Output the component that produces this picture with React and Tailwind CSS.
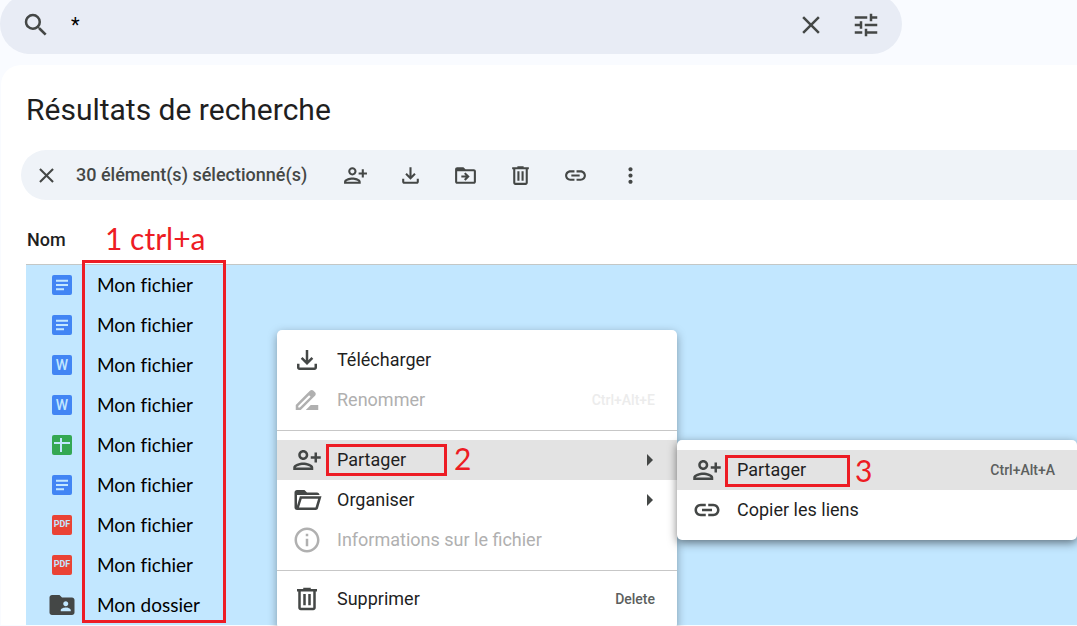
import React from 'react';

const icons = {
    search: 'M15.5 14h-.79l-.28-.27A6.47 6.47 0 0 0 16 9.5 6.5 6.5 0 1 0 9.5 16c1.61 0 3.09-.59 4.23-1.57l.27.28v.79l5 4.99L20.49 19l-4.99-5zm-6 0a4.5 4.5 0 1 1 0-9 4.5 4.5 0 0 1 0 9z',
    close: 'M19 6.41L17.59 5 12 10.59 6.41 5 5 6.41 10.59 12 5 17.59 6.41 19 12 13.41 17.59 19 19 17.59 13.41 12z',
    tune: 'M3 5h10v2H3zM15 3h2v2h4v2h-4v2h-2zM3 11h4V9h2v6H7v-2H3zM11 11h10v2H11zM3 17h6v2H3zM11 15h2v2h8v2h-8v2h-2z',
    share: 'M13 8c0-2.21-1.79-4-4-4S5 5.79 5 8s1.79 4 4 4 4-1.79 4-4zm-2 0c0 1.1-.9 2-2 2s-2-.9-2-2 .9-2 2-2 2 .9 2 2zM1 18v2h16v-2c0-2.66-5.33-4-8-4s-8 1.34-8 4zm2 0c.2-.71 3.3-2 6-2 2.69 0 5.78 1.28 6 2H3zM20 14v-3h3V9h-3V6h-2v3h-3v2h3v3h2z',
    download: 'M4 15h2v3h12v-3h2v3c0 1.1-.9 2-2 2H6c-1.1 0-2-.9-2-2v-3zM15.59 9.59L13 12.17V4h-2v8.17L8.41 9.59 7 11l5 5 5-5z',
    move: 'M20 6h-8l-2-2H4c-1.1 0-2 .9-2 2v12c0 1.1.9 2 2 2h16c1.1 0 2-.9 2-2V8c0-1.1-.9-2-2-2zm0 12H4V8h16v10zm-7.84-6H8v2h4.16l-1.59 1.59L11.99 17 16 13.01 11.99 9l-1.41 1.41L12.16 12z',
    trash: 'M15 4V3H9v1H4v2h1v13c0 1.1.9 2 2 2h10c1.1 0 2-.9 2-2V6h1V4h-5zm2 15H7V6h10v13zM9 8h2v9H9zM13 8h2v9h-2z',
    link: 'M17 7h-4v2h4c1.65 0 3 1.35 3 3s-1.35 3-3 3h-4v2h4c2.76 0 5-2.24 5-5s-2.24-5-5-5zm-6 8H7c-1.65 0-3-1.35-3-3s1.35-3 3-3h4V7H7c-2.76 0-5 2.24-5 5s2.24 5 5 5h4v-2zm-3-4h8v2H8z',
    more: 'M12 8c1.1 0 2-.9 2-2s-.9-2-2-2-2 .9-2 2 .9 2 2 2zm0 2c-1.1 0-2 .9-2 2s.9 2 2 2 2-.9 2-2-.9-2-2-2zm0 6c-1.1 0-2 .9-2 2s.9 2 2 2 2-.9 2-2-.9-2-2-2z',
    rename: 'M18.41 5.8L17.2 4.59c-.78-.78-2.05-.78-2.83 0l-2.68 2.68L3 15.96V20h4.04l8.74-8.74 2.63-2.63c.79-.78.79-2.05 0-2.83zM6.21 18H5v-1.21l8.66-8.66 1.21 1.21L6.21 18zM11 20l4-4h6v4H11z',
    organize: 'M4 20c-1.1 0-2-.9-2-2V6c0-1.1.9-2 2-2h6l2 2h8c1.1 0 2 .9 2 2H4v8.6L6.3 9h17.3l-2.8 9.6c-.2.8-.9 1.4-1.8 1.4zm1.6-2h13.2l2.1-7H7.8z',
    info: 'M11 7h2v2h-2zm0 4h2v6h-2zm1-9C6.48 2 2 6.48 2 12s4.48 10 10 10 10-4.48 10-10S17.52 2 12 2zm0 18c-4.41 0-8-3.59-8-8s3.59-8 8-8 8 3.59 8 8-3.59 8-8 8z',
    folder: 'M20 6h-8l-2-2H4c-1.1 0-2 .9-2 2v12c0 1.1.9 2 2 2h16c1.1 0 2-.9 2-2V8c0-1.1-.9-2-2-2zm-5 3c1.1 0 2 .9 2 2s-.9 2-2 2-2-.9-2-2 .9-2 2-2zm4 8h-8v-1c0-1.33 2.67-2 4-2s4 .67 4 2v1z',
};

function Icon({ name, className = 'size-[30px]' }) {
    return (
        <svg viewBox="0 0 24 24" fill="currentColor" fillRule="evenodd" className={`shrink-0 ${className}`} aria-hidden="true">
            <path d={icons[name]} />
        </svg>
    );
}

function FileIcon({ type }) {
    if (type === 'folder') return <Icon name="folder" className="size-[30px] text-[#444746]" />;
    return (
        <span className="flex w-[30px] justify-center">
            {type === 'doc' && (
                <svg viewBox="0 0 20 20" className="size-5" aria-hidden="true">
                    <rect width="20" height="20" rx="2" fill="#4285f4" />
                    <path d="M4 5.7h12M4 10h12M4 14.3h8" stroke="#c2e7ff" strokeWidth="2" />
                </svg>
            )}
            {type === 'sheet' && (
                <svg viewBox="0 0 20 20" className="size-5" aria-hidden="true">
                    <rect width="20" height="20" rx="2" fill="#34a853" />
                    <path d="M2 8h16M9 3v14" stroke="#c2e7ff" strokeWidth="2" />
                </svg>
            )}
            {type === 'word' && (
                <span className="flex size-5 items-center justify-center rounded-xs bg-[#4285f4] text-sm font-medium text-[#c2e7ff]">W</span>
            )}
            {type === 'pdf' && (
                <span className="flex size-5 items-center justify-center rounded-xs bg-[#ea4335] text-[9px] font-bold text-[#c2e7ff]">PDF</span>
            )}
        </span>
    );
}

function MenuItem({ icon, label, shortcut, submenu, active, disabled }) {
    return (
        <button
            type="button"
            role="menuitem"
            disabled={disabled}
            className={`flex h-10 w-full items-center pr-[22px] pl-[15px] text-left ${active ? 'bg-[#e3e3e3]' : ''} ${disabled ? 'text-[#b0b0b0]' : 'text-[#1f1f1f]'}`}
        >
            <Icon name={icon} className={`size-[30px] ${disabled ? '' : 'text-[#444746]'}`} />
            <span className="ml-[15px] flex-1 text-lg">{label}</span>
            {shortcut && <span className={`text-sm font-medium ${disabled ? 'text-[#ececec]' : 'text-[#5c5f5e]'}`}>{shortcut}</span>}
            {submenu && (
                <svg viewBox="0 0 6 12" className="mr-0.5 h-3 w-1.5" aria-hidden="true">
                    <path d="M0 0l6 6-6 6z" fill="#444746" />
                </svg>
            )}
        </button>
    );
}

const files = [
    { type: 'doc', name: 'Mon fichier' },
    { type: 'doc', name: 'Mon fichier' },
    { type: 'word', name: 'Mon fichier' },
    { type: 'word', name: 'Mon fichier' },
    { type: 'sheet', name: 'Mon fichier' },
    { type: 'doc', name: 'Mon fichier' },
    { type: 'pdf', name: 'Mon fichier' },
    { type: 'pdf', name: 'Mon fichier' },
    { type: 'folder', name: 'Mon dossier' },
];

const actions = [
    { icon: 'share', label: 'Partager' },
    { icon: 'download', label: 'Télécharger' },
    { icon: 'move', label: 'Déplacer' },
    { icon: 'trash', label: 'Supprimer' },
    { icon: 'link', label: 'Copier le lien' },
    { icon: 'more', label: "Plus d'actions" },
];

export default function App() {
    return (
        <div className="relative h-screen overflow-hidden bg-[#f9fbff] font-[Roboto,sans-serif] text-[#1f1f1f]">
            <form role="search" className="-mt-1.5 mr-[175px] flex h-[60px] items-center rounded-full bg-[#e8ecf5] px-[21px] pt-0.5 text-[#444746]">
                <button type="button" aria-label="Rechercher"><Icon name="search" /></button>
                <input aria-label="Rechercher dans Drive" defaultValue="*" className="ml-5 min-w-0 flex-1 bg-transparent text-xl text-black outline-none" />
                <button type="button" aria-label="Effacer la recherche"><Icon name="close" /></button>
                <button type="button" aria-label="Recherche avancée" className="ml-[25px]"><Icon name="tune" /></button>
            </form>

            <main className="mt-[11px] ml-px rounded-tl-[20px] bg-white">
                <h1 className="pt-[25px] pl-[25px] text-3xl leading-10">Résultats de recherche</h1>

                <div className="mt-5 ml-5 flex h-[50px] items-center rounded-l-full bg-[#eff3f8] pl-[13px] text-[#444746]">
                    <button type="button" aria-label="Désélectionner"><Icon name="close" className="size-[25px]" /></button>
                    <span className="ml-[17px] w-[267px] text-lg font-medium">30 élément(s) sélectionné(s)</span>
                    <div className="flex gap-[30px]">
                        {actions.map(action => (
                            <button key={action.icon} type="button" aria-label={action.label}>
                                <Icon name={action.icon} className="size-[25px]" />
                            </button>
                        ))}
                    </div>
                </div>

                <div className="pl-[25px]">
                    <table className="w-full border-separate border-spacing-0 text-left">
                        <thead>
                            <tr>
                                <th className="h-[65px] border-b border-[#c4c7c5] pt-4 pl-px text-lg font-medium">Nom</th>
                            </tr>
                        </thead>
                        <tbody>
                            {files.map((file, i) => (
                                <tr key={i} className="bg-[#c2e7ff]">
                                    <td className="h-10 p-0 pl-[21px]">
                                        <div className="flex items-center">
                                            <FileIcon type={file.type} />
                                            <span className="ml-5 font-[Lato,sans-serif] text-[19px] leading-6 text-black [font-variant-ligatures:none]">{file.name}</span>
                                        </div>
                                    </td>
                                </tr>
                            ))}
                        </tbody>
                    </table>
                </div>
            </main>

            {/* Context menu */}
            <div role="menu" className="absolute top-[330px] left-[277px] w-[400px] rounded-[5px] bg-white py-2.5 shadow-[0_3px_10px_rgba(0,0,0,0.35)]">
                <MenuItem icon="download" label="Télécharger" />
                <MenuItem icon="rename" label="Renommer" shortcut="Ctrl+Alt+E" disabled />
                <hr className="mt-2.5 mb-[9px] border-[#c7c7c7]" />
                <MenuItem icon="share" label="Partager" submenu active />
                <MenuItem icon="organize" label="Organiser" submenu />
                <MenuItem icon="info" label="Informations sur le fichier" disabled />
                <hr className="mt-2.5 mb-2 border-[#c7c7c7]" />
                <MenuItem icon="trash" label="Supprimer" shortcut="Delete" />
            </div>

            <div role="menu" className="absolute top-[440px] left-[677px] w-[400px] rounded-[5px] bg-white py-2.5 shadow-[0_3px_10px_rgba(0,0,0,0.5)]">
                <MenuItem icon="share" label="Partager" shortcut="Ctrl+Alt+A" active />
                <MenuItem icon="link" label="Copier les liens" />
            </div>

            {/* Step annotations */}
            <div className="pointer-events-none font-[Lato,sans-serif] text-3xl text-[#ed1c24]">
                <span className="absolute top-[220px] left-[105px]">1 ctrl+a</span>
                <div className="absolute top-[260px] left-[82px] h-[363px] w-36 border-3" />
                <div className="absolute top-[444px] left-[326px] h-8 w-[121px] border-3" />
                <span className="absolute top-[440px] left-[454px]">2</span>
                <div className="absolute top-[455px] left-[725px] h-8 w-[125px] border-3" />
                <span className="absolute top-[452px] left-[855px]">3</span>
            </div>
        </div>
    );
}
